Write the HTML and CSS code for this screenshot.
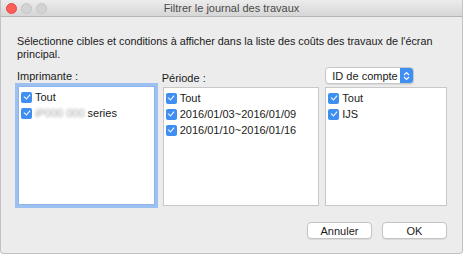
FILE: index.html
```html
<!DOCTYPE html>
<html lang="fr">
<head>
<meta charset="UTF-8" />
<title>Filtrer le journal des travaux</title>
<link rel="stylesheet" href="styles.css">
</head>
<body>
<div class="window">
  <header class="titlebar">
    <div class="lights">
      <span class="light close"></span>
      <span class="light"></span>
      <span class="light"></span>
    </div>
    <div class="title">Filtrer le journal des travaux</div>
  </header>
  <main class="content">
    <p class="intro">Sélectionne cibles et conditions à afficher dans la liste des coûts des travaux de l'écran principal.</p>
    <div class="columns">
      <div class="col col-printer">
        <div class="col-head"><span class="label">Imprimante :</span></div>
        <ul class="list focused">
          <li><span class="check"></span>Tout</li>
          <li><span class="check"></span><span class="blur">iP000 000</span> series</li>
        </ul>
      </div>
      <div class="col col-period">
        <div class="col-head"><span class="label low">Période :</span></div>
        <ul class="list">
          <li><span class="check"></span>Tout</li>
          <li><span class="check"></span>2016/01/03~2016/01/09</li>
          <li><span class="check"></span>2016/01/10~2016/01/16</li>
        </ul>
      </div>
      <div class="col col-account">
        <div class="col-head">
          <div class="popup">
            <span class="popup-text">ID de compte</span>
            <span class="popup-arrow">
              <svg width="7" height="10" viewBox="0 0 7 10"><path d="M1 4 L3.5 1.5 L6 4 M1 6 L3.5 8.5 L6 6" fill="none" stroke="#fff" stroke-width="1.2"/></svg>
            </span>
          </div>
        </div>
        <ul class="list">
          <li><span class="check"></span>Tout</li>
          <li><span class="check"></span>IJS</li>
        </ul>
      </div>
    </div>
    <div class="actions">
      <button class="btn" type="button">Annuler</button>
      <button class="btn" type="button">OK</button>
    </div>
  </main>
</div>
</body>
</html>
```

FILE: styles.css
```css
* {
  box-sizing: border-box;
  margin: 0;
  padding: 0;
}
body {
  font-family: "Liberation Sans", Arial, sans-serif;
  font-size: 11px;
  color: #1a1a1a;
  background: #fff;
  width: 463px;
  height: 255px;
  overflow: hidden;
}
.window {
  width: 463px;
  height: 254px;
  background: #ececec;
  border: 1px solid #c2c2c2;
  border-top: none;
  border-radius: 0 0 4px 4px;
  display: flex;
  flex-direction: column;
}
.titlebar {
  height: 17px;
  position: relative;
  background: linear-gradient(#ececec, #d6d6d6);
  border-bottom: 1px solid #b5b5b5;
  display: flex;
  align-items: center;
  justify-content: center;
}
.lights {
  position: absolute;
  left: 5px;
  top: 3px;
  display: flex;
  gap: 4px;
}
.light {
  width: 11px;
  height: 11px;
  border-radius: 50%;
  background: #d3d3d3;
  border: 1px solid #c4c4c4;
}
.light.close {
  background: #fc5f57;
  border-color: #e44a43;
}
.title {
  font-size: 11px;
  color: #4a4a4a;
}
.content {
  flex: 1;
  padding: 18px 15px 0 15px;
  display: flex;
  flex-direction: column;
}
.intro {
  line-height: 13px;
  padding-left: 1px;
  font-size: 10.8px;
}
.columns {
  display: flex;
  margin-top: 4px;
  margin-left: 2px;
}
.col {
  display: flex;
  flex-direction: column;
}
.col-printer { width: 137px; }
.col-period { width: 157px; margin-left: 8px; }
.col-account { width: 122px; margin-left: 6px; }
.col-head {
  height: 21px;
  display: flex;
  align-items: flex-start;
}
.label {
  margin-top: 5px;
  margin-left: -1px;
}
.label.low { margin-top: 7px; }
.list {
  list-style: none;
  background: #fff;
  border: 1px solid #c8c8c8;
  height: 119px;
  padding-top: 2px;
}
.focused {
  border-color: #8eb6ea;
  box-shadow: 0 0 0 3px #9cc0ef;
}
.col-period .list,
.col-account .list {
  margin-top: 1px;
}
.list li {
  height: 16px;
  display: flex;
  align-items: center;
  padding-left: 2px;
  white-space: nowrap;
}
.check {
  width: 11px;
  height: 11px;
  border-radius: 2px;
  background: #3f8ff2;
  margin-right: 3px;
  position: relative;
}
.check::after {
  content: "";
  position: absolute;
  left: 3.5px;
  top: 1.5px;
  width: 3px;
  height: 5px;
  border-right: 1.4px solid #fff;
  border-bottom: 1.4px solid #fff;
  transform: rotate(40deg);
}
.blur {
  color: #a5a5a5;
  filter: blur(1.4px);
  margin-right: 3px;
}
.popup {
  margin-top: 2px;
  width: 89px;
  height: 17px;
  background: #fff;
  border: 1px solid #c8c8c8;
  border-radius: 4px;
  display: flex;
  align-items: center;
  overflow: hidden;
  box-shadow: 0 1px 1px rgba(0,0,0,0.08);
}
.popup-text {
  flex: 1;
  padding-left: 6px;
}
.popup-arrow {
  width: 13px;
  height: 100%;
  background: #3f8ff2;
  display: flex;
  align-items: center;
  justify-content: center;
}
.actions {
  display: flex;
  justify-content: flex-end;
  gap: 10px;
  margin-top: 16px;
}
.btn {
  width: 65px;
  height: 17px;
  font-family: "Liberation Sans", Arial, sans-serif;
  font-size: 11px;
  color: #1a1a1a;
  background: #fff;
  border: 1px solid #c4c4c4;
  border-radius: 4px;
  box-shadow: 0 1px 1px rgba(0,0,0,0.08);
}
```
